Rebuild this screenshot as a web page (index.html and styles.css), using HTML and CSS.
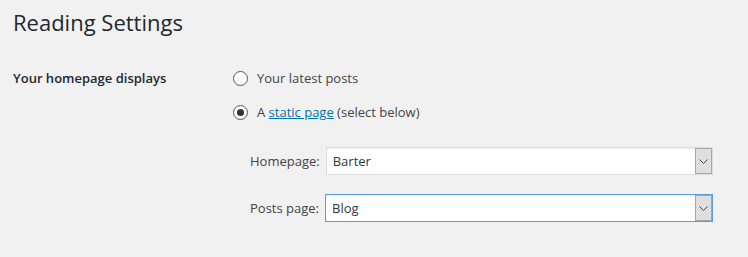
FILE: index.html
```html
<!DOCTYPE html>
<html lang="en">
<head>
    <meta charset="UTF-8">
    <title>Reading Settings</title>
    <link rel="stylesheet" href="styles.css">
</head>
<body>
    <div class="wrap">
        <h1>Reading Settings</h1>
        <div class="form-row">
            <div class="row-label">Your homepage displays</div>
            <div class="row-field">
                <label class="radio-line">
                    <input type="radio" name="show_on_front" value="posts">
                    <span>Your latest posts</span>
                </label>
                <label class="radio-line">
                    <input type="radio" name="show_on_front" value="page" checked>
                    <span>A <a href="#">static page</a> (select below)</span>
                </label>
                <div class="pages">
                    <div class="page-row">
                        <label for="page_on_front">Homepage:</label>
                        <div class="select-box">
                            <select id="page_on_front">
                                <option>Barter</option>
                            </select>
                            <span class="arrow">
                                <svg width="9" height="5" viewBox="0 0 9 5"><path d="M0.5 0.5 L4.5 4.5 L8.5 0.5" fill="none" stroke="#444" stroke-width="1"/></svg>
                            </span>
                        </div>
                    </div>
                    <div class="page-row">
                        <label for="page_for_posts">Posts page:</label>
                        <div class="select-box focused">
                            <select id="page_for_posts">
                                <option>Blog</option>
                            </select>
                            <span class="arrow">
                                <svg width="9" height="5" viewBox="0 0 9 5"><path d="M0.5 0.5 L4.5 4.5 L8.5 0.5" fill="none" stroke="#444" stroke-width="1"/></svg>
                            </span>
                        </div>
                    </div>
                </div>
            </div>
        </div>
    </div>
</body>
</html>
```

FILE: styles.css
```css
* {
    margin: 0;
    padding: 0;
    box-sizing: border-box;
}
body {
    background-color: #f1f1f1;
    color: #444;
    font-family: "Open Sans", sans-serif;
    font-size: 13px;
}
.wrap {
    padding: 8px 0 0 13px;
}
h1 {
    font-size: 22px;
    font-weight: 400;
    color: #23282d;
    line-height: 29px;
}
.form-row {
    display: grid;
    grid-template-columns: 220px 1fr;
    margin-top: 32px;
}
.row-label {
    font-weight: 600;
    color: #23282d;
    line-height: 18px;
}
.radio-line {
    display: flex;
    align-items: center;
    gap: 9px;
    height: 18px;
    margin-bottom: 16px;
}
.radio-line input {
    appearance: none;
    width: 15px;
    height: 15px;
    border: 1px solid #555;
    border-radius: 50%;
    background-color: #fff;
    display: flex;
    align-items: center;
    justify-content: center;
}
.radio-line input:checked::before {
    content: "";
    width: 7px;
    height: 7px;
    border-radius: 50%;
    background-color: #333;
}
a {
    color: #0073aa;
}
.pages {
    padding-left: 17px;
    padding-top: 10px;
}
.page-row {
    display: flex;
    align-items: center;
    gap: 6px;
    width: 463px;
    margin-bottom: 19px;
}
.select-box {
    flex: 1;
    display: flex;
    height: 28px;
    border: 1px solid #ddd;
    background-color: #fff;
    box-shadow: inset 0 1px 2px rgba(0, 0, 0, .07);
}
.select-box.focused {
    border-color: #5b9dd9;
}
.select-box select {
    appearance: none;
    flex: 1;
    border: 0;
    background: transparent;
    font-family: inherit;
    font-size: 13px;
    color: #32373c;
    padding-left: 6px;
    outline: none;
}
.arrow {
    width: 17px;
    display: flex;
    align-items: center;
    justify-content: center;
    background-color: #dfdfdf;
    border: 1px solid #a6a6a6;
}
```
